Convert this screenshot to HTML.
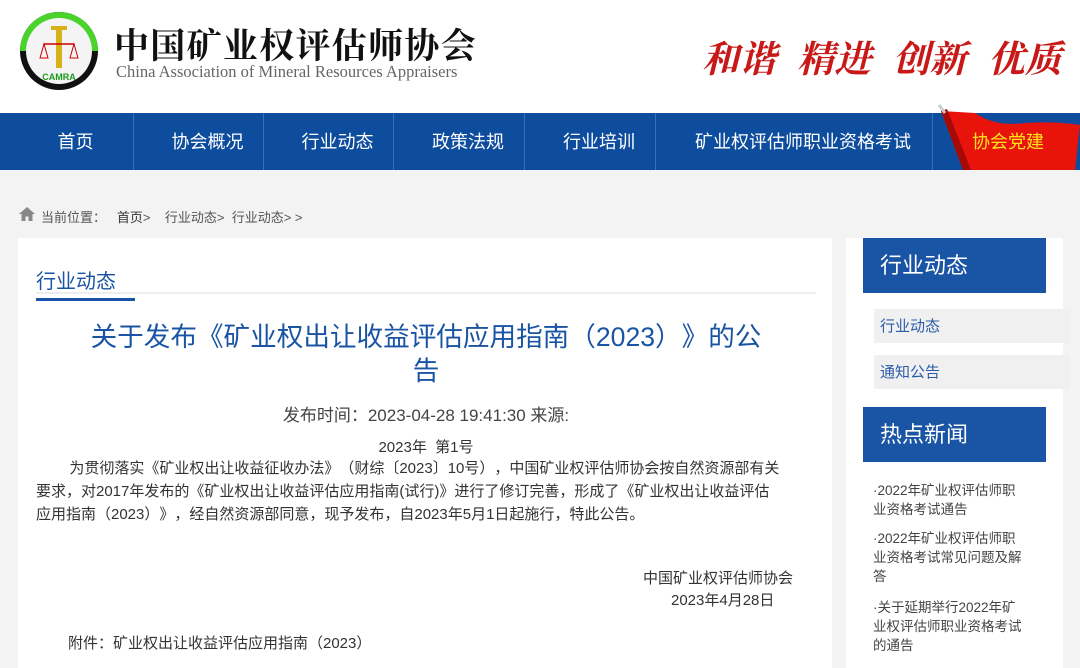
<!DOCTYPE html>
<html><head><meta charset="utf-8">
<style>
*{margin:0;padding:0;box-sizing:border-box}
body{width:1080px;height:660px;overflow:hidden;background:#f3f3f3;font-family:"Liberation Sans","Noto Sans CJK SC",sans-serif;position:relative;color:#333;text-spacing-trim:space-all}
.hdr{position:absolute;left:0;top:0;width:1080px;height:113px;background:#fff}
.abs{position:absolute;white-space:nowrap}
.nav{position:absolute;left:0;top:113px;width:1080px;height:57px;background:#0e4d9e}
.nav div{position:absolute;top:0;height:57px;line-height:58px;color:#fff;font-size:18px;text-align:center;border-right:1px solid #3b6fb3;padding-left:18px}
.main{position:absolute;left:18px;top:238px;width:814px;height:430px;background:#fff}
.side{position:absolute;left:846px;top:238px;width:217px;height:430px;background:#fff}
.bh{position:absolute;left:863px;width:183px;height:55px;background:#1a54a4;color:#fff;font-size:22px;line-height:56px;padding-left:17px}
.si{position:absolute;left:874px;width:196px;height:34px;background:#f0f0f0;color:#2b5ca8;font-size:15px;line-height:35px;padding-left:6px}
.hn{position:absolute;left:873px;font-size:13.5px;line-height:19px;color:#444;width:156px}
.p{font-size:15px;color:#333}
</style></head><body>
<div class="hdr"></div>
<svg class="abs" style="left:18px;top:10px" width="82" height="82" viewBox="0 0 82 82">
<circle cx="41" cy="41" r="39" fill="#111"/>
<path d="M2 41 A39 39 0 0 1 80 41 Z" fill="#4ad32a"/>
<circle cx="41" cy="41" r="33" fill="#f4f4f4"/>
<rect x="38" y="18" width="6" height="40" fill="#d8b21a"/>
<rect x="33" y="16" width="16" height="4" fill="#d8b21a"/>
<line x1="26" y1="34" x2="56" y2="34" stroke="#c00" stroke-width="1.5"/>
<path d="M22 48 L26 34 L30 48 Z M52 48 L56 34 L60 48 Z" fill="none" stroke="#c00"/>
<text x="41" y="70" font-size="9" font-weight="bold" fill="#1a9a1a" text-anchor="middle" font-family="Liberation Sans">CAMRA</text>
</svg>
<div class="abs" style="left:114px;top:19px;font-size:35px;font-weight:bold;color:#111;font-family:'Liberation Serif','Noto Serif CJK SC',serif;letter-spacing:1.3px">中国矿业权评估师协会</div>
<div class="abs" style="left:116px;top:62px;font-size:16.5px;color:#666;font-family:'Liberation Serif',serif">China Association of Mineral Resources Appraisers</div>
<div class="abs" style="left:702px;top:29px;font-size:37px;color:#c81818;font-weight:bold;font-style:italic;font-family:'Noto Serif CJK SC',serif;letter-spacing:0px;word-spacing:12px">和谐 精进 创新 优质</div>
<div class="nav">
<div style="left:0;width:134px">首页</div>
<div style="left:134px;width:130px">协会概况</div>
<div style="left:264px;width:130px">行业动态</div>
<div style="left:394px;width:131px">政策法规</div>
<div style="left:525px;width:131px">行业培训</div>
<div style="left:656px;width:277px">矿业权评估师职业资格考试</div>
</div>
<svg class="abs" style="left:935px;top:103px" width="145" height="67" viewBox="0 0 145 67">
<path d="M6 8 L28 67 L140 67 L145 22 Q120 18 90 20 Q60 24 40 10 Z" fill="#e8140c"/>
<path d="M6 8 L28 67 L36 67 L12 6 Z" fill="#a50a06"/>
<line x1="4" y1="2" x2="10" y2="10" stroke="#ccc" stroke-width="3"/>
</svg>
<div class="abs" style="left:972px;top:113px;line-height:58px;font-size:18px;color:#ffe21a">协会党建</div>
<svg class="abs" style="left:19px;top:207px" width="16" height="14" viewBox="0 0 16 14"><path d="M8 0 L16 7 L13.5 7 L13.5 14 L9.5 14 L9.5 9.5 L6.5 9.5 L6.5 14 L2.5 14 L2.5 7 L0 7 Z" fill="#888"/></svg>
<div class="abs" style="left:41px;top:207px;font-size:13px;color:#555">当前位置：&nbsp;&nbsp;&nbsp;<span style="color:#333">首页</span>&gt;&nbsp;&nbsp;&nbsp;&nbsp;行业动态&gt;&nbsp;&nbsp;行业动态&gt;&nbsp;&gt;</div>
<div class="main"></div>
<div class="abs" style="left:36px;top:265px;font-size:20px;color:#1a54a4">行业动态</div>
<div class="abs" style="left:36px;top:292px;width:780px;height:2px;background:#eee"></div>
<div class="abs" style="left:36px;top:298px;width:99px;height:3px;background:#1a54a4"></div>
<div class="abs" style="left:36px;top:320px;width:780px;text-align:center;font-size:26.6px;line-height:34px;color:#1a54a4;white-space:normal">关于发布《矿业权出让收益评估应用指南（2023）》的公<br>告</div>
<div class="abs" style="left:36px;top:401px;width:780px;text-align:center;font-size:17px;color:#444">发布时间：2023-04-28 19:41:30 来源:</div>
<div class="abs p" style="left:36px;top:436px;width:780px;text-align:center">2023年&nbsp; 第1号</div>
<div class="abs p" style="left:36px;top:457px;line-height:23px">&nbsp;&nbsp;&nbsp;&nbsp;&nbsp;&nbsp;&nbsp;&nbsp;为贯彻落实《矿业权出让收益征收办法》（财综〔2023〕10号），中国矿业权评估师协会按自然资源部有关<br>要求，对2017年发布的《矿业权出让收益评估应用指南(试行)》进行了修订完善，形成了《矿业权出让收益评估<br>应用指南（2023）》，经自然资源部同意，现予发布，自2023年5月1日起施行，特此公告。</div>
<div class="abs p" style="left:643px;top:567px">中国矿业权评估师协会</div>
<div class="abs p" style="left:671px;top:589px">2023年4月28日</div>
<div class="abs p" style="left:68px;top:632px">附件：矿业权出让收益评估应用指南（2023）</div>
<div class="side"></div>
<div class="bh" style="top:238px">行业动态</div>
<div class="si" style="top:309px">行业动态</div>
<div class="si" style="top:355px">通知公告</div>
<div class="bh" style="top:407px">热点新闻</div>
<div class="hn" style="top:481px">·2022年矿业权评估师职业资格考试通告</div>
<div class="hn" style="top:529px">·2022年矿业权评估师职业资格考试常见问题及解答</div>
<div class="hn" style="top:598px">·关于延期举行2022年矿业权评估师职业资格考试的通告</div>
</body></html>
